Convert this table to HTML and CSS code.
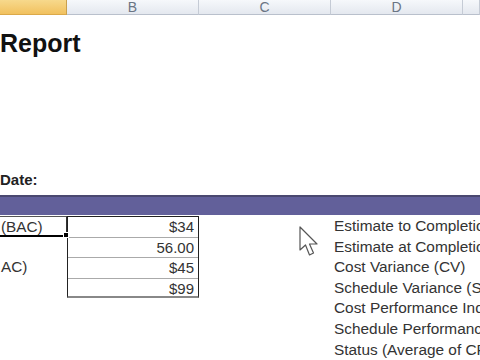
FILE: index.html
```html
<!DOCTYPE html>
<html>
<head>
<meta charset="utf-8">
<link rel="stylesheet" href="styles.css">
</head>
<body>
<div class="page">
  <div class="colhead">
    <div class="ch sel"></div>
    <div class="ch">B</div>
    <div class="ch">C</div>
    <div class="ch">D</div>
    <div class="ch"></div>
  </div>
  <div class="title">Report</div>
  <div class="date">Date:</div>
  <div class="band"></div>
  <div class="grid">
    <div class="a r1 active">(BAC)</div>
    <div class="a r3">AC)</div>
    <div class="vals">
      <div class="v">$34</div>
      <div class="v">56.00</div>
      <div class="v">$45</div>
      <div class="v">$99</div>
    </div>
    <div class="labels">
      <div class="l">Estimate to Completion (ETC)</div>
      <div class="l">Estimate at Completion (EAC)</div>
      <div class="l">Cost Variance (CV)</div>
      <div class="l">Schedule Variance (SV)</div>
      <div class="l">Cost Performance Index (CPI)</div>
      <div class="l">Schedule Performance Index (SPI)</div>
      <div class="l">Status (Average of CPI and SPI)</div>
    </div>
  </div>
  <div class="frame-edge"></div>
  <svg class="cursor" width="21" height="32" viewBox="0 0 21 32">
    <path d="M1 1 L1 24 L6.5 19 L10.5 29 L14.5 27 L10.5 18 L18 18 Z" fill="#fff" stroke="#555" stroke-width="1.2" stroke-linejoin="round"/>
  </svg>
</div>
</body>
</html>
```
FILE: styles.css
```css
* { box-sizing: border-box; }
html, body { margin: 0; padding: 0; background: #fff; }
body { font-family: "Liberation Sans", Arial, sans-serif; color: #222; }
.page {
  position: relative;
  width: 480px;
  height: 360px;
  overflow: hidden;
  display: flex;
  flex-direction: column;
}
.colhead {
  display: grid;
  grid-template-columns: 67px 132px 132px 132px 1fr;
  height: 15px;
  flex: none;
}
.ch {
  background: linear-gradient(#f6f8fb, #e4e8ef);
  border-right: 1px solid #c5cbd5;
  border-bottom: 1px solid #b9c0cc;
  color: #6a7584;
  font-size: 14px;
  line-height: 14px;
  text-align: center;
}
.ch.sel {
  background: linear-gradient(#f7d98c, #f1c15f);
  border-right: 1px solid #c9a04e;
  border-bottom: 1px solid #dba94a;
}
.title {
  font-size: 25px;
  font-weight: bold;
  color: #111;
  height: 30px;
  line-height: 30px;
  margin-top: 13px;
  flex: none;
}
.date {
  font-size: 15px;
  font-weight: bold;
  color: #222;
  margin-top: 114px;
  height: 23px;
  line-height: 16px;
  flex: none;
}
.band {
  height: 20px;
  background: #62609a;
  border-top: 2px solid #4a4870;
  flex: none;
}
.grid {
  display: grid;
  grid-template-columns: 67px 132px 132px 1fr;
  grid-template-rows: repeat(7, 20.6px);
  font-size: 15.3px;
  color: #333;
  flex: none;
  margin-top: 1px;
}
.a {
  grid-column: 1;
  padding-left: 1px;
  line-height: 19px;
}
.r1 { grid-row: 1; }
.r3 { grid-row: 3; }
.active {
  position: relative;
  border-top: 1px solid #555;
  border-right: 1px solid #333;
  border-bottom: 2px solid #000;
}
.active::after {
  content: "";
  position: absolute;
  right: -3px;
  bottom: -3px;
  width: 4px;
  height: 4px;
  background: #000;
  border: 1px solid #fff;
}
.vals {
  grid-column: 2;
  grid-row: 1 / span 4;
  display: grid;
  grid-template-rows: repeat(4, 20.6px);
  border: 1px solid #222;
  border-bottom: 2px solid #888;
  font-size: 15px;
}
.v {
  text-align: right;
  padding-right: 4px;
  line-height: 19px;
  border-bottom: 1px solid #aaa;
}
.v:last-child { border-bottom: none; }
.labels {
  grid-column: 4;
  grid-row: 1 / span 7;
  display: grid;
  grid-template-rows: repeat(7, 20.6px);
  margin-left: 3px;
  font-size: 15.4px;
  white-space: nowrap;
  overflow: hidden;
}
.l { line-height: 20px; }
.frame-edge {
  margin-top: auto;
  height: 3px;
  background: #000;
  flex: none;
}
.cursor {
  position: absolute;
  left: 299px;
  top: 226px;
}
```
